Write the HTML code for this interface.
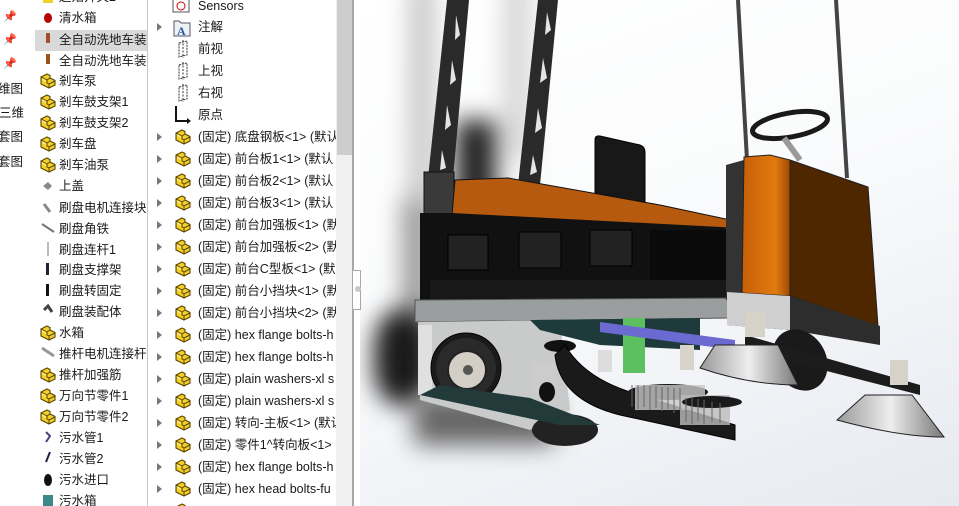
<!DOCTYPE html>
<html><head><meta charset="utf-8">
<style>
*{margin:0;padding:0;box-sizing:border-box}
body{width:959px;height:506px;overflow:hidden;background:#fff;font-family:"Liberation Sans","Noto Sans CJK SC",sans-serif;font-size:12.5px;color:#1a1a1a;position:relative}
.p1{position:absolute;left:0;top:0;width:148px;height:506px;background:#fff;overflow:hidden;border-right:1px solid #c8c8c8;box-shadow:1px 0 3px rgba(0,0,0,.25)}
.p2{position:absolute;left:148px;top:0;width:205px;height:506px;background:#fff;overflow:hidden;border-right:1px solid #a8a8a8}
.row{position:absolute;white-space:nowrap;height:20px;line-height:20px}
.sb{position:absolute;left:188px;top:0;width:17px;height:506px;background:#f0f0f0}
.th{position:absolute;left:189px;top:0;width:15px;height:155px;background:#cdcdcd}
.tri{position:absolute;width:0;height:0;border-left:5px solid #777;border-top:4px solid transparent;border-bottom:4px solid transparent}
.view{position:absolute;left:354px;top:0;width:605px;height:506px;background:linear-gradient(160deg,#ffffff 0%,#fafbfc 45%,#e6e9f0 100%);overflow:hidden}
.sh{position:absolute;filter:blur(12px)}
.split{position:absolute;left:353px;top:0;width:7px;height:506px;background:#fff;border-left:1px solid #a8a8a8}
</style></head><body>
<svg width="0" height="0" style="position:absolute">
<defs>
<symbol id="pt" viewBox="0 0 18 17"><path d="M2 5 L8 2 L11 3.5 L11 6 L16 8.5 L16 13 L10 16 L2 12 Z" fill="#f2cf2a" stroke="#5a4500" stroke-width="1.1"/><path d="M2 5 L8 8 L8 11 L10 12 L16 9 M8 8 L11 6 M10 12 L10 16" fill="none" stroke="#5a4500" stroke-width="1"/><path d="M3 6 L7 8 L7 10 L3 8Z" fill="#ffe880"/></symbol>
<symbol id="pl" viewBox="0 0 16 18"><path d="M4 3 L12 1 L12 15 L4 17 Z" fill="none" stroke="#333" stroke-width="1" stroke-dasharray="2 1"/><path d="M8 0 V18" stroke="#333" stroke-width="1" stroke-dasharray="2 1.5"/></symbol>
</defs></svg>

<div class="p1">
 <div style="position:absolute;left:3px;top:10px;color:#888;font-size:11px">📌</div>
 <div style="position:absolute;left:3px;top:33px;color:#888;font-size:11px">📌</div>
 <div style="position:absolute;left:3px;top:57px;color:#888;font-size:11px">📌</div>
 <div class="row" style="left:-2px;top:79px">维图</div>
 <div class="row" style="left:-1px;top:103px">三维</div>
 <div class="row" style="left:-2px;top:127px">套图</div>
 <div class="row" style="left:-2px;top:152px">套图</div>
 <div style="position:absolute;left:35px;top:30px;width:115px;height:21px;background:#d9d9d9"></div>
 <div class="row" style="left:59px;top:-13px">起始开关2</div>
 <div class="row" style="left:59px;top:8px">清水箱</div>
 <div class="row" style="left:59px;top:30px">全自动洗地车装配</div>
 <div class="row" style="left:59px;top:51px">全自动洗地车装配</div>
 <div class="row" style="left:59px;top:71px">剎车泵</div>
 <div class="row" style="left:59px;top:92px">剎车鼓支架1</div>
 <div class="row" style="left:59px;top:113px">剎车鼓支架2</div>
 <div class="row" style="left:59px;top:134px">剎车盘</div>
 <div class="row" style="left:59px;top:155px">剎车油泵</div>
 <div class="row" style="left:59px;top:176px">上盖</div>
 <div class="row" style="left:59px;top:198px">刷盘电机连接块</div>
 <div class="row" style="left:59px;top:219px">刷盘角铁</div>
 <div class="row" style="left:59px;top:240px">刷盘连杆1</div>
 <div class="row" style="left:59px;top:260px">刷盘支撑架</div>
 <div class="row" style="left:59px;top:281px">刷盘转固定</div>
 <div class="row" style="left:59px;top:302px">刷盘装配体</div>
 <div class="row" style="left:59px;top:323px">水箱</div>
 <div class="row" style="left:59px;top:344px">推杆电机连接杆</div>
 <div class="row" style="left:59px;top:365px">推杆加强筋</div>
 <div class="row" style="left:59px;top:386px">万向节零件1</div>
 <div class="row" style="left:59px;top:407px">万向节零件2</div>
 <div class="row" style="left:59px;top:428px">污水管1</div>
 <div class="row" style="left:59px;top:449px">污水管2</div>
 <div class="row" style="left:59px;top:470px">污水进口</div>
 <div class="row" style="left:59px;top:491px">污水箱</div>
 <svg style="position:absolute;left:38px;top:0" width="20" height="506">
  <rect x="5" y="-5" width="10" height="8" fill="#f2cf2a"/>
  <ellipse cx="10" cy="18" rx="4" ry="5" fill="#b00"/>
  <rect x="8" y="33" width="4" height="10" fill="#a05020"/><rect x="8" y="54" width="4" height="10" fill="#a05020"/>
  <use href="#pt" x="1" y="72" width="18" height="17"/><use href="#pt" x="1" y="93" width="18" height="17"/>
  <use href="#pt" x="1" y="114" width="18" height="17"/><use href="#pt" x="1" y="135" width="18" height="17"/>
  <use href="#pt" x="1" y="156" width="18" height="17"/>
  <path d="M5 186 L10 182 L14 186 L10 190Z" fill="#888"/>
  <path d="M6 204 L12 212" stroke="#888" stroke-width="3"/>
  <path d="M4 224 L16 232" stroke="#777" stroke-width="2"/>
  <path d="M10 242 V256" stroke="#777" stroke-width="1"/>
  <rect x="8" y="263" width="3" height="12" fill="#223"/><rect x="8" y="284" width="3" height="12" fill="#111"/>
  <path d="M6 310 L10 306 L14 312" stroke="#444" stroke-width="3" fill="none"/>
  <use href="#pt" x="1" y="324" width="18" height="17"/>
  <path d="M4 348 L16 356" stroke="#999" stroke-width="3"/>
  <use href="#pt" x="1" y="366" width="18" height="17"/><use href="#pt" x="1" y="387" width="18" height="17"/>
  <use href="#pt" x="1" y="408" width="18" height="17"/>
  <path d="M8 432 L12 436 L8 442" stroke="#447" stroke-width="2" fill="none"/>
  <path d="M12 452 L8 462" stroke="#224" stroke-width="2"/>
  <ellipse cx="10" cy="480" rx="4" ry="6" fill="#111"/>
  <rect x="5" y="495" width="10" height="11" fill="#3a8a8a"/>
 </svg>
</div>

<div class="p2">
 <svg style="position:absolute;left:0;top:0" width="190" height="506">
  <rect x="25" y="-1" width="16" height="13" fill="#fff" stroke="#555"/><circle cx="33" cy="6" r="4" fill="#fff" stroke="#c00"/>
  <path d="M26 21 h5 l2 2 h9 v13 h-16z" fill="#eef2f8" stroke="#556"/><text x="29" y="35" font-family="Liberation Serif" font-weight="bold" font-size="12" fill="#2a5a9a">A</text>
  <use href="#pl" x="27" y="40" width="16" height="18"/><use href="#pl" x="27" y="62" width="16" height="18"/><use href="#pl" x="27" y="84" width="16" height="18"/>
  <path d="M28 106 V121 H41" stroke="#111" stroke-width="2" fill="none"/><path d="M39 118 L43 121 L39 124" fill="#111"/>
  <use href="#pt" x="26" y="128" width="18" height="17"/><use href="#pt" x="26" y="150" width="18" height="17"/>
  <use href="#pt" x="26" y="172" width="18" height="17"/><use href="#pt" x="26" y="194" width="18" height="17"/>
  <use href="#pt" x="26" y="216" width="18" height="17"/><use href="#pt" x="26" y="238" width="18" height="17"/>
  <use href="#pt" x="26" y="260" width="18" height="17"/><use href="#pt" x="26" y="282" width="18" height="17"/>
  <use href="#pt" x="26" y="304" width="18" height="17"/><use href="#pt" x="26" y="326" width="18" height="17"/>
  <use href="#pt" x="26" y="348" width="18" height="17"/><use href="#pt" x="26" y="370" width="18" height="17"/>
  <use href="#pt" x="26" y="392" width="18" height="17"/><use href="#pt" x="26" y="414" width="18" height="17"/>
  <use href="#pt" x="26" y="436" width="18" height="17"/><use href="#pt" x="26" y="458" width="18" height="17"/>
  <use href="#pt" x="26" y="480" width="18" height="17"/><use href="#pt" x="26" y="502" width="18" height="17"/>
 </svg>
 <div class="tri" style="left:9px;top:23px"></div>
 <div class="tri" style="left:9px;top:133px"></div><div class="tri" style="left:9px;top:155px"></div>
 <div class="tri" style="left:9px;top:177px"></div><div class="tri" style="left:9px;top:199px"></div>
 <div class="tri" style="left:9px;top:221px"></div><div class="tri" style="left:9px;top:243px"></div>
 <div class="tri" style="left:9px;top:265px"></div><div class="tri" style="left:9px;top:287px"></div>
 <div class="tri" style="left:9px;top:309px"></div><div class="tri" style="left:9px;top:331px"></div>
 <div class="tri" style="left:9px;top:353px"></div><div class="tri" style="left:9px;top:375px"></div>
 <div class="tri" style="left:9px;top:397px"></div><div class="tri" style="left:9px;top:419px"></div>
 <div class="tri" style="left:9px;top:441px"></div><div class="tri" style="left:9px;top:463px"></div>
 <div class="tri" style="left:9px;top:485px"></div>
 <div class="row" style="left:50px;top:-4px">Sensors</div>
 <div class="row" style="left:50px;top:17px">注解</div>
 <div class="row" style="left:50px;top:39px">前视</div>
 <div class="row" style="left:50px;top:61px">上视</div>
 <div class="row" style="left:50px;top:83px">右视</div>
 <div class="row" style="left:50px;top:105px">原点</div>
 <div class="row" style="left:50px;top:127px">(固定) 底盘钢板&lt;1&gt; (默认</div>
 <div class="row" style="left:50px;top:149px">(固定) 前台板1&lt;1&gt; (默认</div>
 <div class="row" style="left:50px;top:171px">(固定) 前台板2&lt;1&gt; (默认</div>
 <div class="row" style="left:50px;top:193px">(固定) 前台板3&lt;1&gt; (默认</div>
 <div class="row" style="left:50px;top:215px">(固定) 前台加强板&lt;1&gt; (默</div>
 <div class="row" style="left:50px;top:237px">(固定) 前台加强板&lt;2&gt; (默</div>
 <div class="row" style="left:50px;top:259px">(固定) 前台C型板&lt;1&gt; (默</div>
 <div class="row" style="left:50px;top:281px">(固定) 前台小挡块&lt;1&gt; (默</div>
 <div class="row" style="left:50px;top:303px">(固定) 前台小挡块&lt;2&gt; (默</div>
 <div class="row" style="left:50px;top:325px">(固定) hex flange bolts-h</div>
 <div class="row" style="left:50px;top:347px">(固定) hex flange bolts-h</div>
 <div class="row" style="left:50px;top:369px">(固定) plain washers-xl s</div>
 <div class="row" style="left:50px;top:391px">(固定) plain washers-xl s</div>
 <div class="row" style="left:50px;top:413px">(固定) 转向-主板&lt;1&gt; (默认</div>
 <div class="row" style="left:50px;top:435px">(固定) 零件1^转向板&lt;1&gt;</div>
 <div class="row" style="left:50px;top:457px">(固定) hex flange bolts-h</div>
 <div class="row" style="left:50px;top:479px">(固定) hex head bolts-fu</div>
 <div class="sb"></div><div class="th"></div>
</div>

<div class="view">
 <div class="sh" style="left:55px;top:-20px;width:26px;height:230px;background:#c8c8c8"></div>
 <div class="sh" style="left:150px;top:-20px;width:26px;height:180px;background:#d4d4d4"></div>
 <div class="sh" style="left:102px;top:120px;width:40px;height:90px;background:#222"></div>
 <div class="sh" style="left:48px;top:200px;width:30px;height:130px;background:#999"></div>
 <div class="sh" style="left:20px;top:310px;width:60px;height:95px;background:#1a1a1a;border-radius:40%"></div>
 <div class="sh" style="left:60px;top:395px;width:140px;height:50px;background:#666"></div>
<svg width="605" height="506" viewBox="354 0 605 506" style="position:absolute;left:0;top:0">
 <defs>
  <linearGradient id="cone" x1="0" x2="1"><stop offset="0" stop-color="#999"/><stop offset=".5" stop-color="#eee"/><stop offset="1" stop-color="#777"/></linearGradient>
  <linearGradient id="or" x1="0" x2="1"><stop offset="0" stop-color="#c85f08"/><stop offset=".7" stop-color="#e07a10"/><stop offset="1" stop-color="#a04a00"/></linearGradient>
 </defs>
 <path d="M447 0 H469 L453 178 H428Z" fill="#2a2a2a"/>
 <g fill="#e4e4e4">
  <path d="M456 15 L460 35 L455 40Z"/><path d="M452 60 L456 80 L450 85Z"/><path d="M447 105 L451 125 L445 130Z"/><path d="M442 150 L446 168 L440 170Z"/>
 </g>
 <rect x="424" y="172" width="30" height="45" fill="#3a3a3a" stroke="#111"/>
 <path d="M538 0 H558 L540 185 H518Z" fill="#2a2a2a"/>
 <g fill="#e4e4e4">
  <path d="M547 12 L551 30 L545 35Z"/><path d="M543 58 L547 78 L540 83Z"/><path d="M538 108 L542 128 L535 133Z"/><path d="M533 155 L537 172 L530 175Z"/>
 </g>
 <path d="M738 0 L747 160" stroke="#444" stroke-width="4"/>
 <path d="M836 0 L847 178" stroke="#444" stroke-width="4"/>
 <path d="M595 140 Q595 135 600 136 L640 145 Q645 147 645 152 L645 202 L595 202Z" fill="#181818" stroke="#000"/>
 <path d="M455 180 L508 178 L660 205 L740 222 L740 232 L452 215Z" fill="#b55a0e" stroke="#111"/>
 <path d="M420 213 L452 213 L740 228 L740 302 L420 303Z" fill="#111"/>
 <rect x="448" y="235" width="40" height="35" fill="#222" stroke="#000"/>
 <rect x="519" y="232" width="42" height="36" fill="#222" stroke="#000"/>
 <rect x="590" y="230" width="42" height="36" fill="#222" stroke="#000"/>
 <rect x="650" y="230" width="80" height="70" fill="#0a0a0a"/>
 <rect x="430" y="280" width="300" height="20" fill="#181818"/>
 <path d="M415 300 L730 298 L730 318 L415 322Z" fill="#9a9e9e" stroke="#555"/>
 <path d="M418 322 L560 320 L570 410 L530 430 L420 400Z" fill="#c9caca"/>
 <path d="M418 325 L432 325 L432 395 L418 395Z" fill="#e0e0e0"/>
 <path d="M530 320 L700 318 L700 350 L600 345 L540 330Z" fill="#1f3a3a"/>
 <rect x="623" y="318" width="22" height="55" fill="#5cc060"/>
 <path d="M600 322 L735 340 L735 350 L600 332Z" fill="#6a6ad0"/>
 <circle cx="466" cy="368" r="35" fill="#1a1a1a" stroke="#000"/>
 <circle cx="466" cy="368" r="30" fill="#2a2a2a"/>
 <circle cx="467" cy="370" r="19" fill="#d4cfc6" stroke="#222" stroke-width="2"/>
 <circle cx="468" cy="370" r="5" fill="#555"/>
 <ellipse cx="565" cy="430" rx="33" ry="16" fill="#222"/>
 <path d="M420 395 L560 425 L600 425 L530 398 L440 385Z" fill="#223a3a"/>
 <ellipse cx="560" cy="346" rx="16" ry="6" fill="#111"/>
 <rect x="533" y="362" width="22" height="30" fill="#ccc"/>
 <ellipse cx="547" cy="392" rx="8" ry="10" fill="#111"/>
 <path d="M555 355 Q560 400 620 415 L735 440 L735 425 L640 395 Q585 380 565 345Z" fill="#1a1a1a" stroke="#000"/>
 <rect x="598" y="350" width="14" height="22" fill="#ddd"/>
 <rect x="680" y="345" width="14" height="25" fill="#d8d4cc"/>
 <ellipse cx="668" cy="392" rx="40" ry="8" fill="#1a1a1a"/>
 <rect x="635" y="385" width="70" height="25" fill="#c8c8c8" opacity=".8"/>
 <rect x="680" y="395" width="50" height="30" fill="#bbb" opacity=".8"/>
 <ellipse cx="712" cy="402" rx="30" ry="6" fill="#1a1a1a"/>
 <path d="M632 385 v22 M638 385 v24 M644 385 v22 M650 386 v24 M656 386 v22 M662 387 v24 M668 387 v22 M674 388 v25 M680 388 v22 M686 398 v24 M692 398 v26 M698 399 v22 M704 400 v24 M712 402 v20 M720 403 v20" stroke="#666" stroke-width="1"/>
 <path d="M726 165 L744 160 L744 300 L726 300Z" fill="#333"/>
 <path d="M744 157 L770 155 L790 160 L790 296 L742 293Z" fill="url(#or)" stroke="#222"/>
 <path d="M790 160 L868 187 L878 326 L790 296Z" fill="#4e2600" stroke="#222"/>
 <ellipse cx="790" cy="125" rx="38" ry="12" fill="none" stroke="#1a1a1a" stroke-width="5" transform="rotate(-10 790 125)"/>
 <path d="M784 138 L800 160" stroke="#999" stroke-width="6"/>
 <path d="M727 292 L790 296 L880 326 L880 345 L790 330 L727 325Z" fill="#2d2d2d"/>
 <path d="M727 292 L790 296 L790 330 L727 325Z" fill="#cfcfcf"/>
 <ellipse cx="800" cy="360" rx="26" ry="32" fill="#1a1a1a" transform="rotate(-30 800 360)"/>
 <path d="M745 335 L920 385 L920 395 L745 350Z" fill="#1c1c1c"/>
 <rect x="745" y="312" width="20" height="25" fill="#d6d2c8"/>
 <rect x="890" y="360" width="18" height="25" fill="#d6d2c8"/>
 <path d="M715 345 L778 345 L798 385 Q750 385 700 368Z" fill="url(#cone)" stroke="#222"/>
 <path d="M865 395 L912 395 L944 437 Q900 437 837 420Z" fill="url(#cone)" stroke="#222"/>
</svg>
</div>
<div class="split"><div style="position:absolute;left:-1px;top:270px;width:8px;height:40px;border:1px solid #a8a8a8;border-left:none;background:#fff"></div><div style="position:absolute;left:1px;top:286px;width:6px;height:6px;border-radius:50%;background:#c8c8c8"></div></div>
</body></html>
